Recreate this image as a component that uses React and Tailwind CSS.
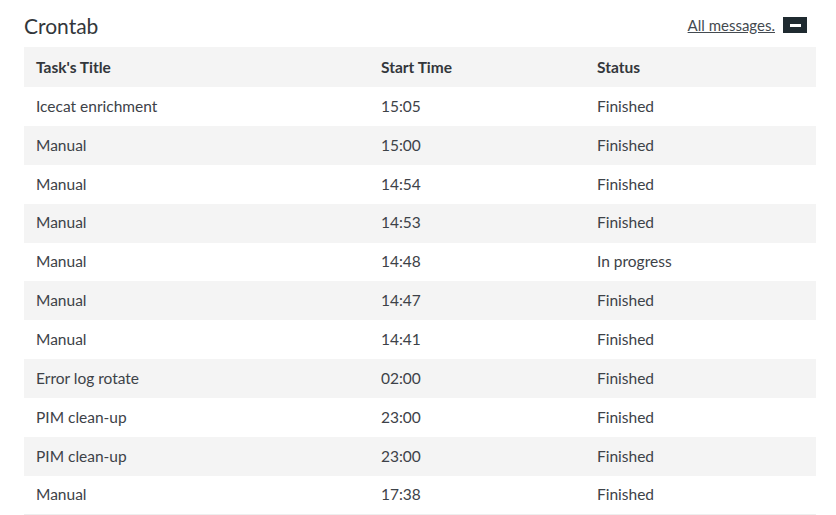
import React from "react";

const rows = [
    { title: "Icecat enrichment", time: "15:05", status: "Finished" },
    { title: "Manual", time: "15:00", status: "Finished" },
    { title: "Manual", time: "14:54", status: "Finished" },
    { title: "Manual", time: "14:53", status: "Finished" },
    { title: "Manual", time: "14:48", status: "In progress" },
    { title: "Manual", time: "14:47", status: "Finished" },
    { title: "Manual", time: "14:41", status: "Finished" },
    { title: "Error log rotate", time: "02:00", status: "Finished" },
    { title: "PIM clean-up", time: "23:00", status: "Finished" },
    { title: "PIM clean-up", time: "23:00", status: "Finished" },
    { title: "Manual", time: "17:38", status: "Finished" },
];

const App = () => {
    return (
        <div className="bg-white min-h-screen px-6 pt-[10px] text-[#3d4248]" style={{ fontFamily: "Lato, 'Open Sans', sans-serif" }}>
            <div className="flex items-center justify-between w-[792px] h-[30px] mb-[7px]">
                <h2 className="text-[21px] leading-none text-[#33373b]">Crontab</h2>
                <div className="flex items-center gap-2 mr-[9px]">
                    <a href="#" className="text-[15px] underline text-[#444a50]">All messages.</a>
                    <button type="button" className="w-6 h-4 bg-[#1f2a30] flex items-center justify-center">
                        <span className="block w-[11px] h-[3px] bg-white" />
                    </button>
                </div>
            </div>

            <table className="w-[792px] border-collapse text-[15.5px]">
                <thead>
                    <tr className="bg-[#f4f4f4] h-10">
                        <th className="text-left font-bold pl-3 pt-[2px] w-[344px] text-[#33373b]">Task's Title</th>
                        <th className="text-left font-bold pl-[13px] pt-[2px] w-[216px] text-[#33373b]">Start Time</th>
                        <th className="text-left font-bold pl-[13px] pt-[2px] text-[#33373b]">Status</th>
                    </tr>
                </thead>
                <tbody>
                    {rows.map((r, i) => (
                        <tr key={i} className={`h-[38.9px] ${i % 2 === 1 ? "bg-[#f4f4f4]" : "bg-white"} ${i === rows.length - 1 ? "border-b border-[#eeeeee]" : ""}`}>
                            <td className="pl-3">{r.title}</td>
                            <td className="pl-[13px]">{r.time}</td>
                            <td className="pl-[13px]">{r.status}</td>
                        </tr>
                    ))}
                </tbody>
            </table>
        </div>
    );
};

export default App;
